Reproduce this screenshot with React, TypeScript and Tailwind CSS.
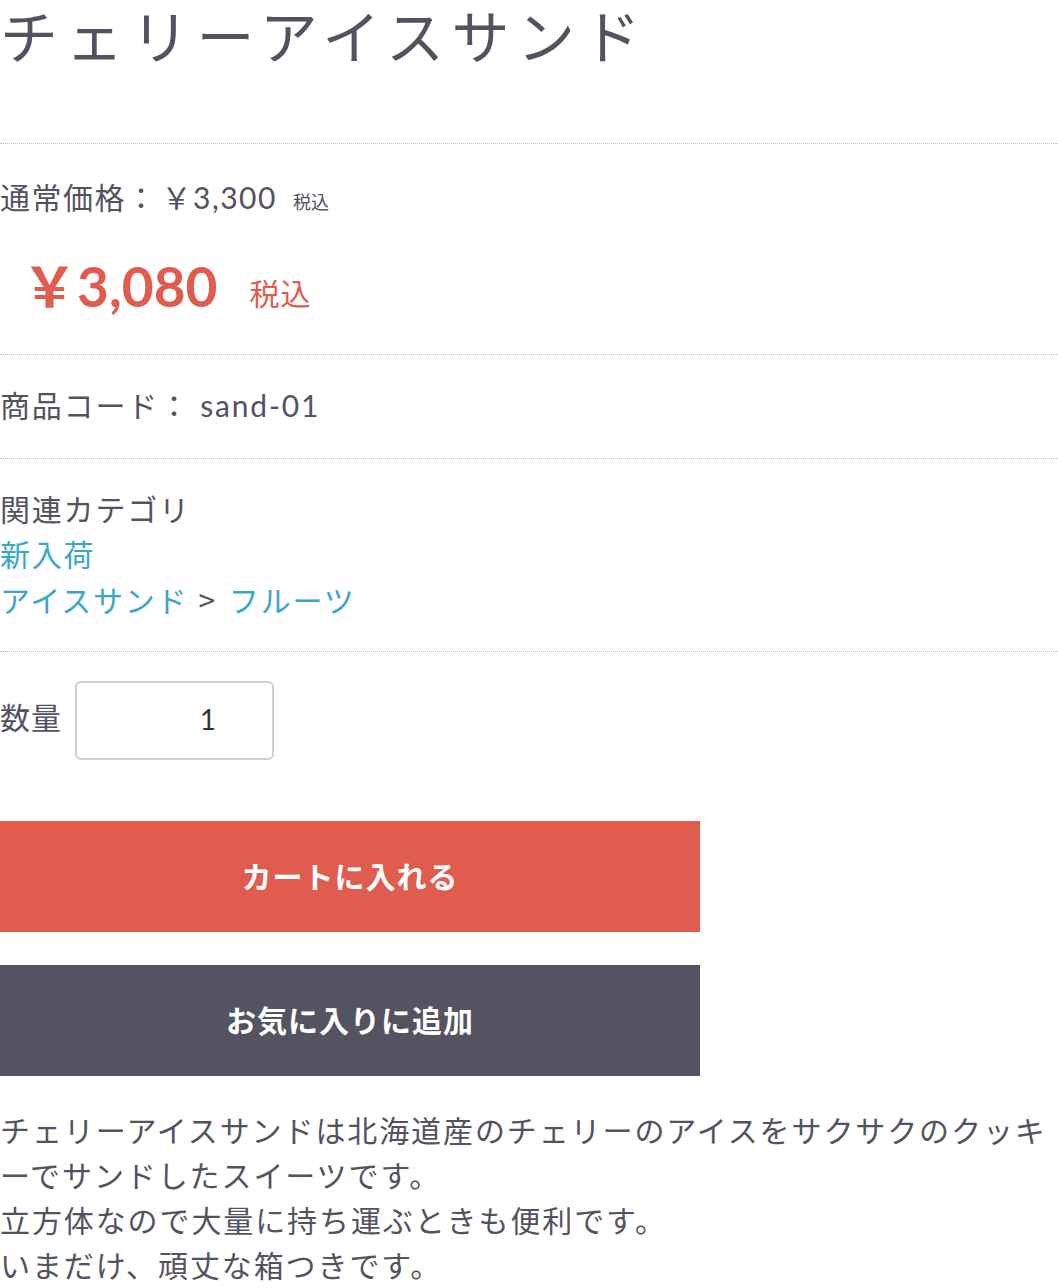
import { useState } from "react";

const font = { fontFamily: 'Lato, "Noto Sans CJK JP", sans-serif' };
const cjk = { fontFamily: '"Noto Sans CJK JP", sans-serif' };

export default function App() {
  const [qty, setQty] = useState("1");

  return (
    <div className="w-[1058px] bg-white text-[#53535f]" style={font}>
      {/* title */}
      <div className="h-[143px]">
        <h1 className="text-[58px] leading-[74px] tracking-[7.5px] font-normal">
          チェリーアイスサンド
        </h1>
      </div>

      {/* price */}
      <div className="border-t border-dotted border-[#bbbbbb] pt-[31px] pb-[32px]">
        <div className="h-[45px] text-[30px] leading-[45px] tracking-[1.5px] flex items-baseline">
          <span>通常価格：</span>
          <span className="ml-[4px]">￥3,300</span>
          <span className="ml-[16px] text-[18px] tracking-normal">税込</span>
        </div>
        <div className="mt-[30px] h-[72px] pl-[22px] flex items-end text-[#df5c4f]">
          <span className="text-[55px] leading-[72px] font-bold">￥3,080</span>
          <span className="ml-[32px] mb-[6px] text-[30px] leading-[45px] tracking-[1px]">税込</span>
        </div>
      </div>

      {/* code */}
      <div className="border-t border-dotted border-[#bbbbbb] pt-[28px] pb-[30px]">
        <div className="text-[30px] leading-[45px] tracking-[1.8px]">
          商品コード： sand-01
        </div>
      </div>

      {/* category */}
      <div className="border-t border-dotted border-[#bbbbbb] pt-[28px] pb-[28px] text-[30px] leading-[45px] tracking-[1.8px]">
        <div>関連カテゴリ</div>
        <div>
          <a className="text-[#3ba6c9]">新入荷</a>
        </div>
        <div>
          <a className="text-[#3ba6c9]">アイスサンド</a>
          <span className="ml-[10px] mr-[12px]" style={cjk}>&gt;</span>
          <a className="text-[#3ba6c9]">フルーツ</a>
        </div>
      </div>

      {/* quantity + buttons */}
      <div className="border-t border-dotted border-[#bbbbbb] pt-[29px]">
        <div className="flex items-center gap-[13px]">
          <span className="text-[30px] leading-[45px] tracking-[1px] -mt-[6px]">数量</span>
          <input
            value={qty}
            onChange={(e) => setQty(e.target.value)}
            className="w-[199px] h-[79px] border-2 border-[#cfcfcf] rounded-[6px] text-[28px] text-[#333] text-right pr-[56px] pb-[3px] outline-none"
            style={font}
          />
        </div>

        <button className="mt-[61px] w-[700px] h-[111px] bg-[#df5c4f] text-white text-[30px] font-bold tracking-[1px] block">
          カートに入れる
        </button>
        <button className="mt-[33px] w-[700px] h-[111px] bg-[#535362] text-white text-[30px] font-bold tracking-[1px] block">
          お気に入りに追加
        </button>
      </div>

      {/* description */}
      <div className="pt-[32px] text-[30px] leading-[45px] tracking-[1.9px]">
        <p>
          チェリーアイスサンドは北海道産のチェリーのアイスをサクサクのクッキーでサンドしたスイーツです。
        </p>
        <p>立方体なので大量に持ち運ぶときも便利です。</p>
        <p>いまだけ、頑丈な箱つきです。</p>
      </div>
    </div>
  );
}
